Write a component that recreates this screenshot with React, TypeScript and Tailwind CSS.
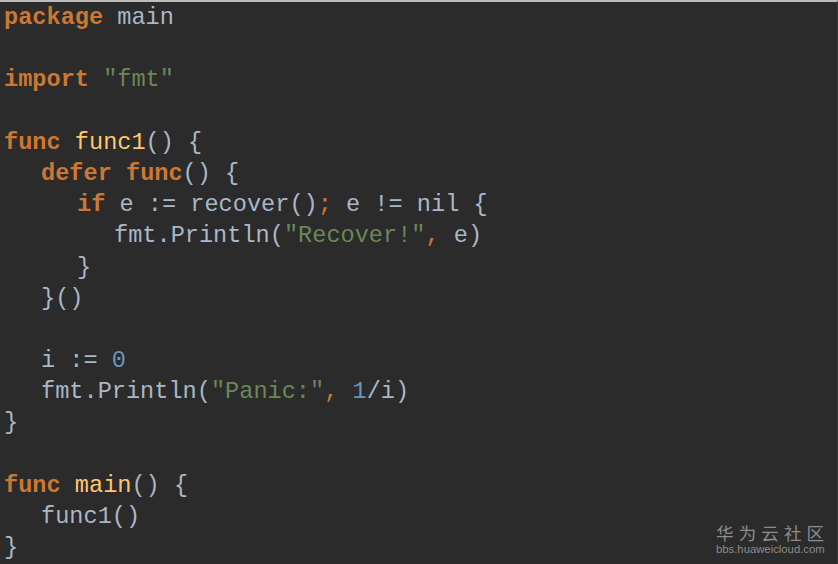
import React from "react";

type Tok = [string, string];

const K = "text-[#cc7832] font-bold";
const D = "text-[#a9b7c6]";
const S = "text-[#6a8759]";
const N = "text-[#6897bb]";
const F = "text-[#ffc66d]";
const P = "text-[#cc7832]";

const lines: { indent: number; toks: Tok[] }[] = [
  { indent: 0, toks: [["package", K], [" main", D]] },
  { indent: 0, toks: [] },
  { indent: 0, toks: [["import", K], [" ", D], ['"fmt"', S]] },
  { indent: 0, toks: [] },
  { indent: 0, toks: [["func", K], [" ", D], ["func1", F], ["() {", D]] },
  { indent: 1, toks: [["defer", K], [" ", D], ["func", K], ["() {", D]] },
  { indent: 2, toks: [["if", K], [" e := recover()", D], [";", P], [" e != nil {", D]] },
  { indent: 3, toks: [["fmt.Println(", D], ['"Recover!"', S], [",", P], [" e)", D]] },
  { indent: 2, toks: [["}", D]] },
  { indent: 1, toks: [["}()", D]] },
  { indent: 0, toks: [] },
  { indent: 1, toks: [["i := ", D], ["0", N]] },
  { indent: 1, toks: [["fmt.Println(", D], ['"Panic:"', S], [",", P], [" ", D], ["1", N], ["/i)", D]] },
  { indent: 0, toks: [["}", D]] },
  { indent: 0, toks: [] },
  { indent: 0, toks: [["func", K], [" ", D], ["main", F], ["() {", D]] },
  { indent: 1, toks: [["func1()", D]] },
  { indent: 0, toks: [["}", D]] },
];

const indentCls = ["pl-0", "pl-[37px]", "pl-[73px]", "pl-[110px]"];

export default function App() {
  return (
    <div className="relative w-[838px] h-[564px] overflow-hidden bg-[#2b2b2b] border-t-2 border-t-[#bdbdbd] border-r border-r-[#3a3a3a]">
      <div
        className="pl-[4px] pt-0 text-[23.6px] leading-[31.2px] whitespace-pre"
        style={{ fontFamily: '"Liberation Mono", monospace' }}
      >
        {lines.map((l, i) => (
          <div key={i} className={`h-[31.2px] ${indentCls[l.indent]}`}>
            {l.toks.length === 0
              ? "\u00a0"
              : l.toks.map((t, j) => (
                  <span key={j} className={t[1]}>
                    {t[0]}
                  </span>
                ))}
          </div>
        ))}
      </div>
      <div className="absolute right-[13px] bottom-[8px] w-[108px] flex flex-col text-[#8c8c8c]">
        <div
          className="flex justify-between text-[17.5px] leading-[20px]"
          style={{ fontFamily: '"Noto Sans CJK SC", sans-serif' }}
        >
          <span>华</span>
          <span>为</span>
          <span>云</span>
          <span>社</span>
          <span>区</span>
        </div>
        <div
          className="text-[11.3px] leading-[13px] text-center"
          style={{ fontFamily: '"Liberation Sans", sans-serif' }}
        >
          bbs.huaweicloud.com
        </div>
      </div>
    </div>
  );
}
